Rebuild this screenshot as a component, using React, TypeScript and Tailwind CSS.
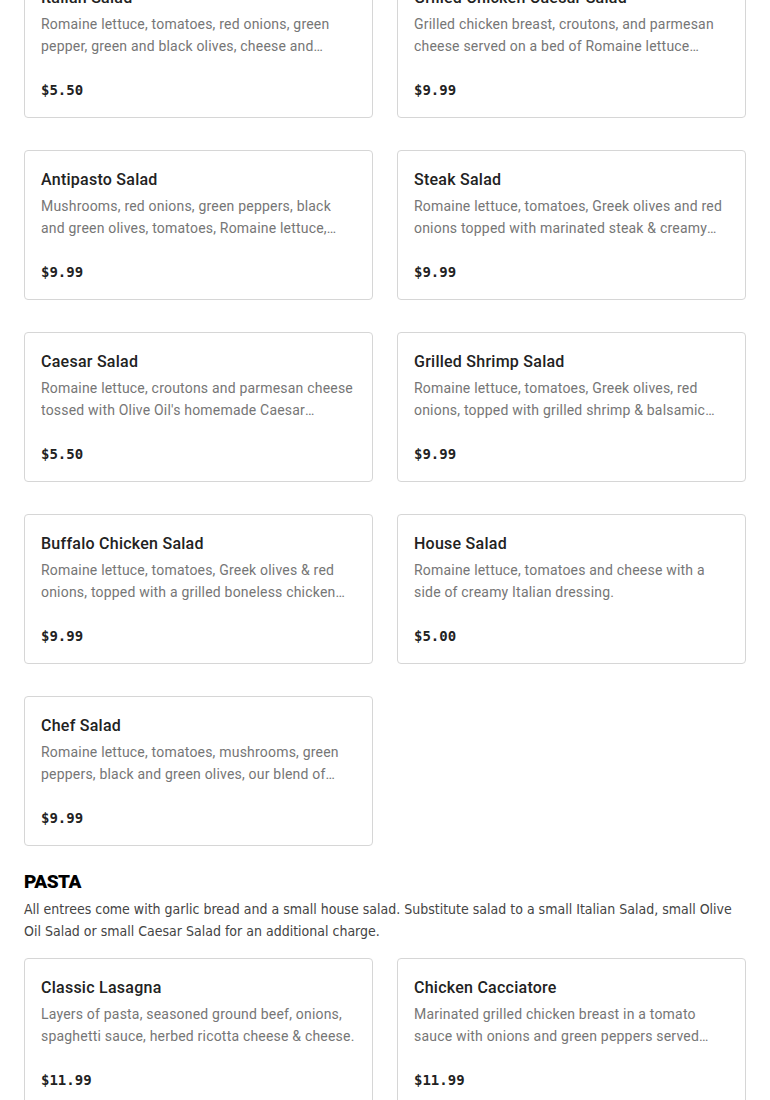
import React from 'react';

type Item = { name: string; desc: string; price: string };

const SALADS: Item[] = [
  { name: 'Italian Salad', desc: 'Romaine lettuce, tomatoes, red onions, green pepper, green and black olives, cheese and pepperoncini with Italian dressing.', price: '$5.50' },
  { name: 'Grilled Chicken Caesar Salad', desc: 'Grilled chicken breast, croutons, and parmesan cheese served on a bed of Romaine lettuce tossed with Caesar dressing.', price: '$9.99' },
  { name: 'Antipasto Salad', desc: 'Mushrooms, red onions, green peppers, black and green olives, tomatoes, Romaine lettuce, salami, ham and cheese.', price: '$9.99' },
  { name: 'Steak Salad', desc: 'Romaine lettuce, tomatoes, Greek olives and red onions topped with marinated steak & creamy balsamic dressing.', price: '$9.99' },
  { name: 'Caesar Salad', desc: "Romaine lettuce, croutons and parmesan cheese tossed with Olive Oil's homemade Caesar dressing.", price: '$5.50' },
  { name: 'Grilled Shrimp Salad', desc: 'Romaine lettuce, tomatoes, Greek olives, red onions, topped with grilled shrimp & balsamic dressing.', price: '$9.99' },
  { name: 'Buffalo Chicken Salad', desc: 'Romaine lettuce, tomatoes, Greek olives & red onions, topped with a grilled boneless chicken breast tossed in buffalo sauce.', price: '$9.99' },
  { name: 'House Salad', desc: 'Romaine lettuce, tomatoes and cheese with a side of creamy Italian dressing.', price: '$5.00' },
  { name: 'Chef Salad', desc: 'Romaine lettuce, tomatoes, mushrooms, green peppers, black and green olives, our blend of cheeses, ham and turkey.', price: '$9.99' },
];

const PASTA: Item[] = [
  { name: 'Classic Lasagna', desc: 'Layers of pasta, seasoned ground beef, onions, spaghetti sauce, herbed ricotta cheese & cheese.', price: '$11.99' },
  { name: 'Chicken Cacciatore', desc: 'Marinated grilled chicken breast in a tomato sauce with onions and green peppers served over spaghetti.', price: '$11.99' },
];

function Card({ item }: { item: Item }) {
  return (
    <div className="border border-[#d6d6d6] rounded-[4px] bg-white px-4 pt-4 pb-4 h-[150px]">
      <h3 className="mt-px text-[16px] leading-6 font-medium tracking-[0.25px] text-[#222]" style={{ fontFamily: 'Roboto, sans-serif' }}>
        {item.name}
      </h3>
      <p
        className="mt-[3px] text-[14px] leading-[22px] tracking-[0.2px] text-[#767676] line-clamp-2"
        style={{ fontFamily: 'Roboto, sans-serif' }}
      >
        {item.desc}
      </p>
      <div className="mt-[23px] text-[14px] leading-5 font-bold text-[#222]" style={{ fontFamily: '"DejaVu Sans Mono", monospace' }}>
        {item.price}
      </div>
    </div>
  );
}

export default function App() {
  return (
    <main className="bg-white min-h-screen px-6 overflow-hidden h-[1100px]">
      <div className="-mt-8 grid grid-cols-2 gap-x-6 gap-y-8">
        {SALADS.map((s) => (
          <Card key={s.name} item={s} />
        ))}
      </div>

      {/* Pasta section */}
      <section className="mt-[22px]">
        <h2 className="text-[19px] leading-7 font-black text-black tracking-[-0.5px]" style={{ fontFamily: 'Roboto, sans-serif' }}>
          PASTA
        </h2>
        <p className="mt-[2px] text-[14px] leading-[22px] text-[#444]" style={{ fontFamily: '"DejaVu Sans Condensed", sans-serif' }}>
          All entrees come with garlic bread and a small house salad. Substitute salad to a small Italian Salad, small Olive Oil Salad or small Caesar Salad for an additional charge.
        </p>
        <div className="mt-4 grid grid-cols-2 gap-x-6 gap-y-8">
          {PASTA.map((p) => (
            <Card key={p.name} item={p} />
          ))}
        </div>
      </section>
    </main>
  );
}
